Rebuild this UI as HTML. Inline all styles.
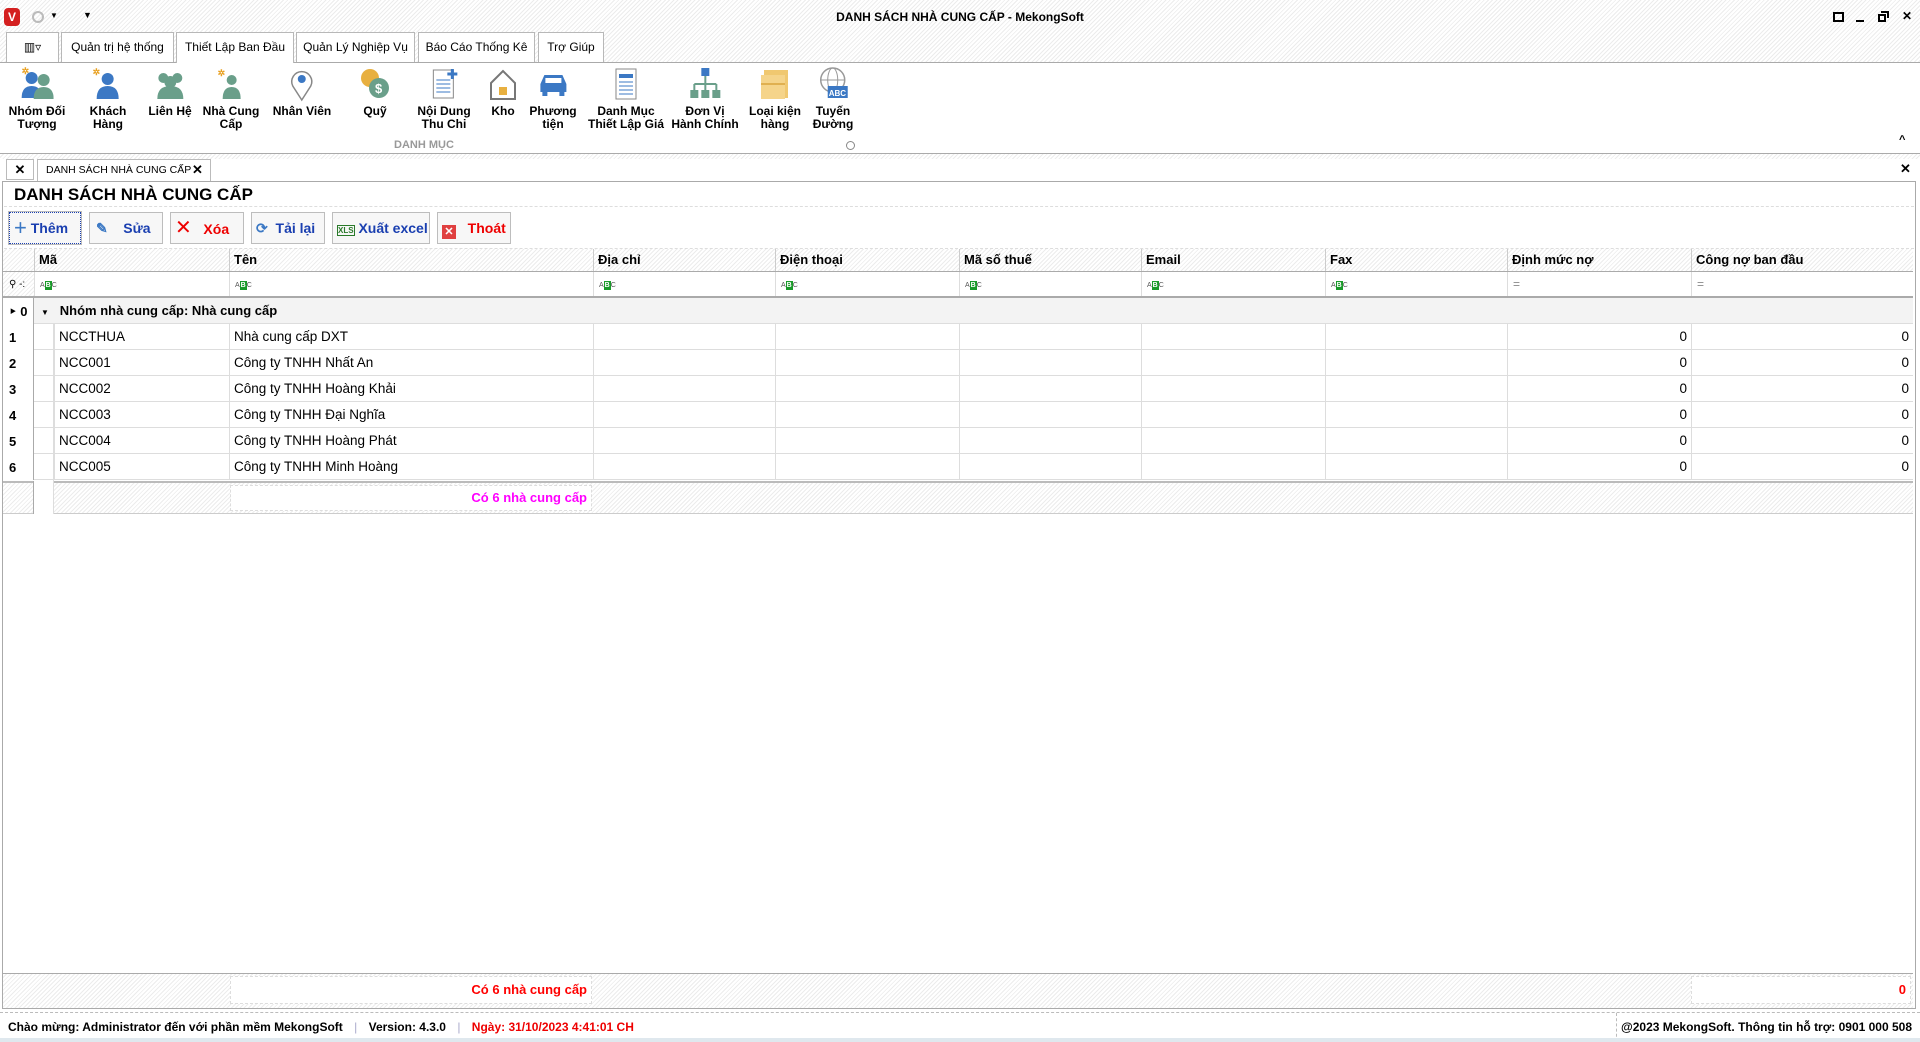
<!DOCTYPE html>
<html><head><meta charset="utf-8"><style>
*{box-sizing:border-box;margin:0;padding:0}
body{width:1920px;height:1042px;position:relative;overflow:hidden;background:#fff;font-family:"Liberation Sans",sans-serif;font-size:13px;color:#000}
.a{position:absolute}
.hatch{background:repeating-linear-gradient(135deg,#fff 0 2px,#ececec 2px 3px)}
.tab{position:absolute;top:32px;height:30px;border:1px solid #b8b8b8;border-bottom:none;background:#fff;font-size:12px;line-height:28px;text-align:center;white-space:nowrap}
.ri{position:absolute;top:66px;text-align:center;font-weight:bold;font-size:12px;line-height:13px;transform:translateX(-50%);white-space:nowrap}
.ri .ic{width:34px;height:36px;margin:0 auto 3px;position:relative}
.btn{position:absolute;top:212px;height:32px;border:1px solid #bdbdbd;background:#f7f7f7;font-weight:bold;font-size:14px;line-height:30px;white-space:nowrap}
.hd{position:absolute;top:249px;height:23px;font-weight:bold;font-size:13px;line-height:22px;padding-left:4px;border-left:1px solid #ccc}
.fl{position:absolute;top:272px;height:25px;border-left:1px solid #ddd;padding-left:5px;line-height:25px;font-size:9px;color:#888}
.abc{display:inline-block;font-size:7px;color:#555}.abc b{background:#1a9a2a;color:#fff;padding:1px 1px;font-size:7px}
.row{position:absolute;left:3px;width:1910px;height:26px;border-bottom:1px solid #ddd}
.rn{position:absolute;left:0;width:31px;height:26px;font-weight:bold;font-size:13px;line-height:28px;padding-left:6px;border-right:1px solid #aaa;background:#fff}
.c{position:absolute;top:0;height:26px;line-height:26px;font-size:13.5px;border-left:1px solid #ddd;padding:0 4px;white-space:nowrap}
.n{text-align:right}
.wc{position:absolute;top:9px;font-size:12px;font-weight:bold}
</style></head><body>
<div class="a hatch" style="left:0;top:0;width:1920px;height:62px"></div>
<div class="a" style="left:4px;top:8px;width:16px;height:18px;background:#d42020;border-radius:4px;color:#fff;font-weight:bold;font-size:12px;text-align:center;line-height:18px">V</div>
<div class="a" style="left:32px;top:11px;width:12px;height:12px;border:2px solid #bbb;border-radius:50%"></div>
<div class="a" style="left:50px;top:11px;font-size:8px">▼</div>
<div class="a" style="left:83px;top:10px;font-size:9px">▼</div>
<div class="a" style="left:0;top:10px;width:1920px;text-align:center;font-weight:bold;font-size:12px">DANH SÁCH NHÀ CUNG CẤP - MekongSoft</div>
<div class="a" style="left:1833px;top:12px;width:11px;height:10px;border:2px solid #000;border-style:solid dashed"></div>
<div class="a" style="left:1856px;top:20px;width:8px;height:2px;background:#000"></div>
<div class="a" style="left:1878px;top:14px;width:8px;height:8px;border:2px solid #000"></div>
<div class="a" style="left:1881px;top:11px;width:8px;height:7px;border:2px solid #000;border-left:none;border-bottom:none"></div>
<div class="wc" style="left:1902px">✕</div>
<div class="tab" style="left:6px;width:53px;">▥▿</div>
<div class="tab" style="left:61px;width:113px">Quản trị hệ thống</div>
<div class="tab" style="left:176px;width:118px;height:31px;z-index:2">Thiết Lập Ban Đầu</div>
<div class="tab" style="left:296px;width:119px">Quản Lý Nghiệp Vụ</div>
<div class="tab" style="left:418px;width:117px">Báo Cáo Thống Kê</div>
<div class="tab" style="left:538px;width:66px">Trợ Giúp</div>
<div class="a" style="left:0;top:62px;width:1920px;height:1px;background:#aaa"></div>
<div class="ri" style="left:37px"><div class="ic"><svg width="34" height="36"><circle cx="12" cy="12" r="6" fill="#3b78c4"/><path d="M2 32q0-12 10-12t10 12z" fill="#3b78c4"/><circle cx="24" cy="14" r="6" fill="#6a9f8a"/><path d="M14 33q0-12 10-12t10 12z" fill="#6a9f8a"/><text x="2" y="8" font-size="9" fill="#e8a020">✲</text></svg></div>Nhóm Đối<br>Tượng</div>
<div class="ri" style="left:108px"><div class="ic"><svg width="34" height="36"><circle cx="17" cy="13" r="6" fill="#3b78c4"/><path d="M6 33q0-13 11-13t11 13z" fill="#3b78c4"/><text x="2" y="9" font-size="9" fill="#e8a020">✲</text></svg></div>Khách<br>Hàng</div>
<div class="ri" style="left:170px"><div class="ic"><svg width="34" height="36"><circle cx="10" cy="12" r="5" fill="#6a9f8a"/><circle cx="24" cy="12" r="5" fill="#6a9f8a"/><circle cx="17" cy="16" r="6" fill="#6a9f8a"/><path d="M4 33q0-13 13-13t13 13z" fill="#6a9f8a"/></svg></div>Liên Hệ</div>
<div class="ri" style="left:231px"><div class="ic"><svg width="34" height="36"><circle cx="18" cy="14" r="5" fill="#6a9f8a"/><path d="M9 33q0-12 9-12t9 12z" fill="#6a9f8a"/><text x="4" y="10" font-size="9" fill="#e8a020">✲</text></svg></div>Nhà Cung<br>Cấp</div>
<div class="ri" style="left:302px"><div class="ic"><svg width="34" height="36"><path d="M17 34l-9-14a10 10 0 1 1 18 0z" fill="none" stroke="#888" stroke-width="1.5"/><circle cx="17" cy="13" r="4" fill="#3b78c4"/></svg></div>Nhân Viên</div>
<div class="ri" style="left:375px"><div class="ic"><svg width="34" height="36"><circle cx="12" cy="12" r="9" fill="#e8b040"/><circle cx="21" cy="22" r="10" fill="#6a9f8a"/><text x="17" y="27" font-size="13" fill="#fff" font-weight="bold">$</text></svg></div>Quỹ</div>
<div class="ri" style="left:444px"><div class="ic"><svg width="34" height="36"><rect x="6" y="4" width="20" height="28" fill="#fff" stroke="#888"/><path d="M9 14h14M9 18h14M9 22h14M9 26h14" stroke="#3b78c4"/><path d="M25 3v10M20 8h10" stroke="#3b78c4" stroke-width="3"/></svg></div>Nội Dung<br>Thu Chi</div>
<div class="ri" style="left:503px"><div class="ic"><svg width="34" height="36"><path d="M5 17L17 5l12 12v16H5z" fill="#fff" stroke="#777" stroke-width="2"/><rect x="13" y="21" width="8" height="8" fill="#e8b040"/></svg></div>Kho</div>
<div class="ri" style="left:553px"><div class="ic"><svg width="34" height="36"><path d="M4 26v-8l4-9h18l4 9v8z" fill="#3b78c4"/><rect x="9" y="12" width="16" height="5" fill="#fff"/><rect x="6" y="26" width="5" height="4" fill="#3b78c4"/><rect x="23" y="26" width="5" height="4" fill="#3b78c4"/></svg></div>Phương<br>tiện</div>
<div class="ri" style="left:626px"><div class="ic"><svg width="34" height="36"><rect x="7" y="3" width="20" height="30" fill="#fff" stroke="#888"/><path d="M10 8h14v4H10z" fill="#3b78c4"/><path d="M10 16h14M10 20h14M10 24h14M10 28h14" stroke="#3b78c4"/></svg></div>Danh Mục<br>Thiết Lập Giá</div>
<div class="ri" style="left:705px"><div class="ic"><svg width="34" height="36"><rect x="13" y="2" width="8" height="8" fill="#3b78c4"/><path d="M17 10v8M6 18h22M6 18v6M17 18v6M28 18v6" stroke="#6a9f8a" stroke-width="2"/><rect x="2" y="24" width="8" height="8" fill="#6a9f8a"/><rect x="13" y="24" width="8" height="8" fill="#6a9f8a"/><rect x="24" y="24" width="8" height="8" fill="#6a9f8a"/></svg></div>Đơn Vị<br>Hành Chính</div>
<div class="ri" style="left:775px"><div class="ic"><svg width="34" height="36"><rect x="6" y="4" width="24" height="28" fill="#f0c870"/><rect x="3" y="9" width="24" height="24" fill="#f5d48a"/><rect x="3" y="17" width="24" height="2" fill="#e0b050"/></svg></div>Loại kiện<br>hàng</div>
<div class="ri" style="left:833px"><div class="ic"><svg width="34" height="36"><circle cx="17" cy="14" r="12" fill="none" stroke="#999" stroke-width="1.5"/><ellipse cx="17" cy="14" rx="5" ry="12" fill="none" stroke="#999"/><path d="M5 14h24" stroke="#999"/><rect x="12" y="20" width="20" height="12" fill="#3b78c4"/><text x="13" y="30" font-size="8" fill="#fff">ABC</text></svg></div>Tuyến<br>Đường</div>
<div class="a" style="left:394px;top:139px;font-size:11px;font-weight:bold;color:#999">DANH MỤC</div>
<div class="a" style="left:846px;top:141px;width:9px;height:9px;border:1px solid #888;border-radius:50%"></div>
<div class="a" style="left:1899px;top:134px;font-size:11px;font-weight:bold">^</div>
<div class="a" style="left:0;top:153px;width:1920px;height:1px;background:#aaa"></div>
<div class="a hatch" style="left:0;top:154px;width:1920px;height:5px"></div>
<div class="a" style="left:6px;top:159px;width:28px;height:21px;border:1px solid #bbb;text-align:center;font-weight:bold;line-height:20px">✕</div>
<div class="a" style="left:37px;top:159px;width:174px;height:22px;border:1px solid #bbb;border-bottom:none;background:#fff;font-size:10.5px;line-height:20px;padding-left:8px;white-space:nowrap">DANH SÁCH NHÀ CUNG CẤP<b style="position:absolute;left:154px;font-size:13px">✕</b></div>
<div class="a" style="left:1900px;top:161px;font-weight:bold">✕</div>
<div class="a" style="left:2px;top:181px;width:1914px;height:828px;border:1px solid #aaa"></div>
<div class="a" style="left:14px;top:185px;font-weight:bold;font-size:17px">DANH SÁCH NHÀ CUNG CẤP</div>
<div class="a" style="left:4px;top:206px;width:1910px;border-top:1px dashed #ddd"></div>
<div class="btn" style="left:9px;width:72px;color:#1a3fb0;border:1px dotted #1a3fb0;outline:1px solid #bbb;padding-left:4px"><span style="font-size:22px;font-weight:normal;color:#3b78c4;vertical-align:-2px">+</span> Thêm</div>
<div class="btn" style="left:89px;width:74px;color:#1a3fb0;padding-left:6px"><span style="color:#3b78c4">✎</span>&nbsp;&nbsp;&nbsp; Sửa</div>
<div class="btn" style="left:170px;width:74px;color:#e00;padding-left:4px"><span style="font-size:20px;font-weight:normal">✕</span>&nbsp;&nbsp; Xóa</div>
<div class="btn" style="left:251px;width:74px;color:#1a3fb0;padding-left:4px"><span style="color:#3b78c4">⟳</span>&nbsp; Tải lại</div>
<div class="btn" style="left:332px;width:98px;color:#1a3fb0;padding-left:4px"><span style="font-size:8px;color:#2a7a2a;border:1px solid #2a7a2a">XLS</span> Xuất excel</div>
<div class="btn" style="left:437px;width:74px;color:#e00;padding-left:4px"><span style="display:inline-block;width:14px;height:14px;background:#e04040;color:#fff;font-size:11px;line-height:14px;text-align:center;vertical-align:-2px">✕</span>&nbsp;&nbsp; Thoát</div>
<div class="a" style="left:4px;top:248px;width:1910px;border-top:1px dashed #ddd"></div>
<div class="a hatch" style="left:3px;top:249px;width:1910px;height:23px"></div>
<div class="hd" style="left:34px;width:195px">Mã</div>
<div class="hd" style="left:229px;width:364px">Tên</div>
<div class="hd" style="left:593px;width:182px">Địa chỉ</div>
<div class="hd" style="left:775px;width:184px">Điện thoại</div>
<div class="hd" style="left:959px;width:182px">Mã số thuế</div>
<div class="hd" style="left:1141px;width:184px">Email</div>
<div class="hd" style="left:1325px;width:182px">Fax</div>
<div class="hd" style="left:1507px;width:184px">Định mức nợ</div>
<div class="hd" style="left:1691px;width:222px">Công nợ ban đầu</div>
<div class="a" style="left:3px;top:271px;width:1910px;height:1px;background:#aaa"></div>
<div class="a hatch" style="left:3px;top:272px;width:31px;height:25px;font-size:10px;line-height:25px;padding-left:6px">⚲ -:</div>
<div class="fl" style="left:34px;width:195px"><span class="abc">A<b>B</b>C</span></div>
<div class="fl" style="left:229px;width:364px"><span class="abc">A<b>B</b>C</span></div>
<div class="fl" style="left:593px;width:182px"><span class="abc">A<b>B</b>C</span></div>
<div class="fl" style="left:775px;width:184px"><span class="abc">A<b>B</b>C</span></div>
<div class="fl" style="left:959px;width:182px"><span class="abc">A<b>B</b>C</span></div>
<div class="fl" style="left:1141px;width:184px"><span class="abc">A<b>B</b>C</span></div>
<div class="fl" style="left:1325px;width:182px"><span class="abc">A<b>B</b>C</span></div>
<div class="fl" style="left:1507px;width:184px;font-size:12px">=</div>
<div class="fl" style="left:1691px;width:222px;font-size:12px">=</div>
<div class="a" style="left:3px;top:296px;width:1910px;height:2px;background:#aaa"></div>
<div class="row" style="top:298px;background:#f3f3f3"><div class="rn">‣ 0</div><div class="a" style="left:38px;top:0;line-height:26px;font-weight:bold;font-size:13px"><span style="font-size:8px">▼</span>&nbsp;&nbsp; Nhóm nhà cung cấp: Nhà cung cấp</div></div>
<div class="a" style="left:34px;top:324px;width:20px;height:190px;background:#fff;border-right:1px solid #ddd"></div>
<div class="row" style="top:324px"><div class="rn">1</div><div class="c" style="left:51px;width:175px">NCCTHUA</div><div class="c" style="left:226px;width:364px">Nhà cung cấp DXT</div><div class="c" style="left:590px;width:182px"></div><div class="c" style="left:772px;width:184px"></div><div class="c" style="left:956px;width:182px"></div><div class="c" style="left:1138px;width:184px"></div><div class="c" style="left:1322px;width:182px"></div><div class="c n" style="left:1504px;width:184px">0</div><div class="c n" style="left:1688px;width:222px">0</div></div>
<div class="row" style="top:350px"><div class="rn">2</div><div class="c" style="left:51px;width:175px">NCC001</div><div class="c" style="left:226px;width:364px">Công ty TNHH Nhất An</div><div class="c" style="left:590px;width:182px"></div><div class="c" style="left:772px;width:184px"></div><div class="c" style="left:956px;width:182px"></div><div class="c" style="left:1138px;width:184px"></div><div class="c" style="left:1322px;width:182px"></div><div class="c n" style="left:1504px;width:184px">0</div><div class="c n" style="left:1688px;width:222px">0</div></div>
<div class="row" style="top:376px"><div class="rn">3</div><div class="c" style="left:51px;width:175px">NCC002</div><div class="c" style="left:226px;width:364px">Công ty TNHH Hoàng Khải</div><div class="c" style="left:590px;width:182px"></div><div class="c" style="left:772px;width:184px"></div><div class="c" style="left:956px;width:182px"></div><div class="c" style="left:1138px;width:184px"></div><div class="c" style="left:1322px;width:182px"></div><div class="c n" style="left:1504px;width:184px">0</div><div class="c n" style="left:1688px;width:222px">0</div></div>
<div class="row" style="top:402px"><div class="rn">4</div><div class="c" style="left:51px;width:175px">NCC003</div><div class="c" style="left:226px;width:364px">Công ty TNHH Đại Nghĩa</div><div class="c" style="left:590px;width:182px"></div><div class="c" style="left:772px;width:184px"></div><div class="c" style="left:956px;width:182px"></div><div class="c" style="left:1138px;width:184px"></div><div class="c" style="left:1322px;width:182px"></div><div class="c n" style="left:1504px;width:184px">0</div><div class="c n" style="left:1688px;width:222px">0</div></div>
<div class="row" style="top:428px"><div class="rn">5</div><div class="c" style="left:51px;width:175px">NCC004</div><div class="c" style="left:226px;width:364px">Công ty TNHH Hoàng Phát</div><div class="c" style="left:590px;width:182px"></div><div class="c" style="left:772px;width:184px"></div><div class="c" style="left:956px;width:182px"></div><div class="c" style="left:1138px;width:184px"></div><div class="c" style="left:1322px;width:182px"></div><div class="c n" style="left:1504px;width:184px">0</div><div class="c n" style="left:1688px;width:222px">0</div></div>
<div class="row" style="top:454px"><div class="rn">6</div><div class="c" style="left:51px;width:175px">NCC005</div><div class="c" style="left:226px;width:364px">Công ty TNHH Minh Hoàng</div><div class="c" style="left:590px;width:182px"></div><div class="c" style="left:772px;width:184px"></div><div class="c" style="left:956px;width:182px"></div><div class="c" style="left:1138px;width:184px"></div><div class="c" style="left:1322px;width:182px"></div><div class="c n" style="left:1504px;width:184px">0</div><div class="c n" style="left:1688px;width:222px">0</div></div>
<div class="a hatch" style="left:3px;top:481px;width:1910px;height:33px;border-top:2px solid #bbb;border-bottom:1px solid #ccc"></div>
<div class="a" style="left:3px;top:481px;width:31px;height:33px;border-right:1px solid #aaa"></div>
<div class="a" style="left:34px;top:481px;width:20px;height:33px;background:#fff;border-right:1px solid #ddd"></div>
<div class="a" style="left:230px;top:485px;width:362px;height:26px;background:#fff;border:1px dashed #ddd;text-align:right;padding-right:4px;line-height:24px;color:#f0f;font-weight:bold;font-size:13px">Có 6 nhà cung cấp</div>
<div class="a hatch" style="left:3px;top:973px;width:1910px;height:35px;border-top:1px solid #aaa"></div>
<div class="a" style="left:230px;top:976px;width:362px;height:28px;background:#fff;border:1px dashed #ddd;text-align:right;padding-right:4px;line-height:26px;color:#f00;font-weight:bold;font-size:13px">Có 6 nhà cung cấp</div>
<div class="a" style="left:1691px;top:976px;width:220px;height:28px;background:#fff;border:1px dashed #ddd;text-align:right;padding-right:4px;line-height:26px;color:#f00;font-weight:bold;font-size:13px">0</div>
<div class="a" style="left:0;top:1012px;width:1920px;border-top:1px dashed #bbb"></div>
<div class="a" style="left:8px;top:1020px;font-size:12px;font-weight:bold;white-space:nowrap">Chào mừng: Administrator đến với phần mềm MekongSoft <span style="color:#aac;font-weight:normal;margin:0 8px">|</span> Version: 4.3.0 <span style="color:#aac;font-weight:normal;margin:0 8px">|</span> <span style="color:#e00">Ngày: 31/10/2023 4:41:01 CH</span></div>
<div class="a" style="left:1616px;top:1013px;height:29px;border-left:1px dashed #bbb"></div>
<div class="a" style="right:8px;top:1020px;font-size:12px;font-weight:bold">@2023 MekongSoft. Thông tin hỗ trợ: 0901 000 508</div>
<div class="a" style="left:0;top:1038px;width:1920px;height:4px;background:#dfe8ee"></div>
</body></html>
